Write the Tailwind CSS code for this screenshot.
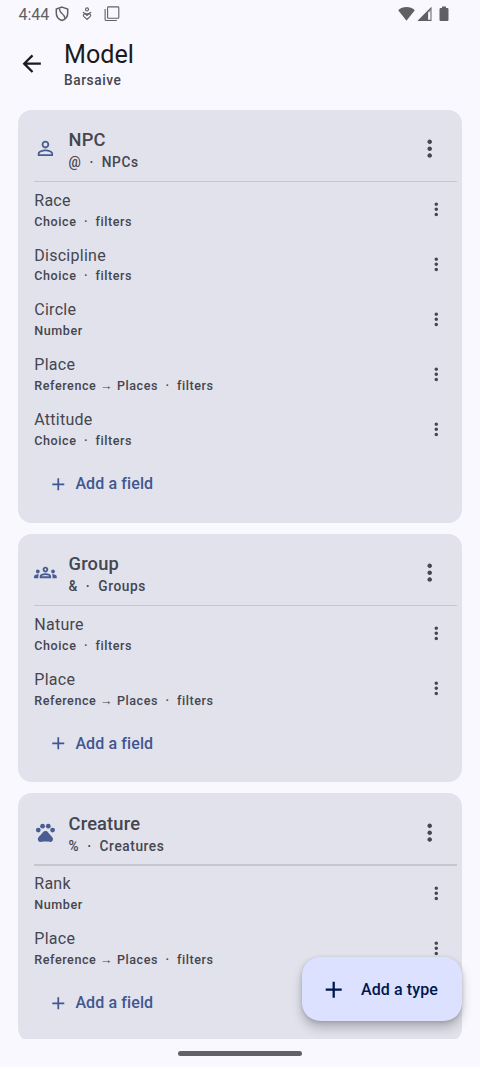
<!DOCTYPE html>
<html lang="en">
<head>
<meta charset="utf-8">
<title>Model</title>
<script src="https://cdn.jsdelivr.net/npm/@tailwindcss/browser@4"></script>
</head>
<body class="bg-[#faf8ff]">
<svg class="hidden">
  <symbol id="more" viewBox="0 0 24 24"><path d="M12 8c1.1 0 2-.9 2-2s-.9-2-2-2-2 .9-2 2 .9 2 2 2zm0 2c-1.1 0-2 .9-2 2s.9 2 2 2 2-.9 2-2-.9-2-2-2zm0 6c-1.1 0-2 .9-2 2s.9 2 2 2 2-.9 2-2-.9-2-2-2z"/></symbol>
  <symbol id="add" viewBox="0 0 24 24"><path d="M19 13h-6v6h-2v-6H5v-2h6V5h2v6h6v2z"/></symbol>
  <symbol id="person" viewBox="0 0 24 24"><path d="M12 5.9a2.1 2.1 0 1 1 0 4.2 2.1 2.1 0 0 1 0-4.2m0 9c2.97 0 6.1 1.46 6.1 2.1v1.1H5.9V17c0-.64 3.13-2.1 6.1-2.1M12 4C9.79 4 8 5.79 8 8s1.79 4 4 4 4-1.79 4-4-1.79-4-4-4zm0 9c-2.67 0-8 1.34-8 4v3h16v-3c0-2.66-5.33-4-8-4z"/></symbol>
  <symbol id="groups" viewBox="0 0 24 24"><path d="M4 13c1.1 0 2-.9 2-2s-.9-2-2-2-2 .9-2 2 .9 2 2 2zm1.13 1.1c-.37-.06-.74-.1-1.13-.1-.99 0-1.93.21-2.78.58C.48 14.9 0 15.62 0 16.43V18h4.5v-1.61c0-.83.23-1.61.63-2.29zM20 13c1.1 0 2-.9 2-2s-.9-2-2-2-2 .9-2 2 .9 2 2 2zm4 3.43c0-.81-.48-1.53-1.22-1.85-.85-.37-1.79-.58-2.78-.58-.39 0-.76.04-1.13.1.4.68.63 1.46.63 2.29V18H24v-1.57zm-7.76-2.78c-1.17-.52-2.61-.9-4.24-.9s-3.07.39-4.24.9C6.68 14.13 6 15.21 6 16.39V18h12v-1.61c0-1.18-.68-2.26-1.76-2.74zM8.07 16c.09-.23.13-.39.91-.69.97-.38 1.99-.56 3.02-.56s2.05.18 3.02.56c.77.3.81.46.91.69H8.07zM12 8c.55 0 1 .45 1 1s-.45 1-1 1-1-.45-1-1 .45-1 1-1m0-2c-1.66 0-3 1.34-3 3s1.34 3 3 3 3-1.34 3-3-1.34-3-3-3z"/></symbol>
  <symbol id="pets" viewBox="0 0 24 24"><circle cx="4.5" cy="9.5" r="2.5"/><circle cx="9" cy="5.5" r="2.5"/><circle cx="15" cy="5.5" r="2.5"/><circle cx="19.5" cy="9.5" r="2.5"/><path d="M17.34 14.86c-.87-1.02-1.6-1.89-2.48-2.91-.46-.54-1.05-1.08-1.75-1.32-.11-.04-.22-.07-.33-.09-.25-.04-.52-.04-.78-.04s-.53 0-.79.05c-.11.02-.22.05-.33.09-.7.24-1.28.78-1.75 1.32-.87 1.02-1.6 1.89-2.48 2.91-1.31 1.31-2.92 2.76-2.62 4.79.29 1.02 1.02 2.03 2.33 2.32.73.15 3.06-.44 5.54-.44h.18c2.48 0 4.81.58 5.54.44 1.31-.29 2.04-1.31 2.33-2.32.31-2.04-1.3-3.49-2.61-4.8z"/></symbol>
</svg>

<div class="relative flex h-[1067px] w-[480px] flex-col overflow-hidden bg-[#faf8ff] font-[Roboto,sans-serif] text-[#45464f]">
  <!-- Status bar -->
  <div class="flex h-[27px] shrink-0 items-center pl-[18.5px] pr-[31px] text-[#606063]">
    <span class="w-[35.5px] pt-[1px] text-[16px] leading-[27px]">4:44</span>
    <svg class="h-4 w-4" viewBox="0 0 16 16" fill="none" stroke="currentColor" stroke-width="1.5"><path d="M8 1.100 13.700 3v4.200c0 3.300-2.400 6.100-5.700 7.300-3.300-1.200-5.700-4-5.700-7.300V3L8 1.100z"/><path stroke-width="1.300" d="M5.600 2.600C5 8.200 11.200 7.200 10.900 12.600"/></svg>
    <svg class="ml-[9px] h-4 w-4" viewBox="0 0 16 16" fill="none" stroke="currentColor" stroke-width="1.1"><circle cx="8" cy="3.4" r="1.5"/><path d="M4 6C4.600 7.400 6.800 7 8 8.300 9.200 7 11.400 7.400 12 6M8 13.400 4.700 10.300C3.500 8.900 5.400 7 7 8.500L8 9.400l1-.9c1.600-1.500 3.500.4 2.300 1.800z"/></svg>
    <svg class="ml-[9px] h-4 w-4" viewBox="0 0 16 16" fill="none" stroke="currentColor" stroke-width="1.1"><rect x="3.600" y=".9" width="11.200" height="11.300" rx=".8"/><path d="M1.100 3.100v10.300q0 1.100 1.100 1.100h10.600"/></svg>
    <div class="flex-1"></div>
    <svg class="h-4 w-[17px]" viewBox="0 0 17 16" fill="currentColor"><path d="M8.5 14.7.2 4.2C4.5-.2 12.500-.2 16.800 4.200z"/></svg>
    <svg class="ml-[2px] h-4 w-[15px]" viewBox="0 0 15 16"><path fill="currentColor" d="M14.500.8V15H.3z"/><path fill="#faf8ff" d="M11.100 5.900 13.500 3.500V13.800H11.100z"/><path fill="currentColor" d="M11.100 4h2.400v2.200h-2.400z" opacity=".5"/></svg>
    <svg class="ml-[7px] h-4 w-[10px]" viewBox="0 0 10 16" fill="currentColor"><path d="M3 .5h4V2h1.300q1.200 0 1.200 1.200v10.600q0 1.200-1.200 1.200H1.700Q.5 15 .5 13.800V3.200Q.5 2 1.700 2H3z"/></svg>
  </div>

  <!-- Top bar -->
  <header class="flex h-[82.8px] shrink-0 items-start">
    <svg class="ml-[18.300px] mt-[23.300px] size-[27.430px] text-[#1a1b21]" viewBox="0 0 24 24" fill="currentColor"><path d="M20 11H7.830l5.590-5.590L12 4l-8 8 8 8 1.410-1.410L7.830 13H20v-2z"/></svg>
    <div class="ml-[18.300px] mt-[12px]">
      <h1 class="text-[25.140px] leading-[32px] text-[#1a1b21]">Model</h1>
      <p class="text-[13.710px] font-medium leading-[18.290px] tracking-[0.570px]">Barsaive</p>
    </div>
  </header>

  <!-- Types -->
  <main id="types" class="flex h-[929.600px] shrink-0 flex-col gap-[11.430px] overflow-hidden px-[18.290px]"></main>

  <!-- Gesture bar -->
  <div class="mx-auto mt-[11.500px] h-[5px] w-[124px] shrink-0 rounded-full bg-[#626266]"></div>

  <!-- Floating button -->
  <button class="absolute left-[301.500px] top-[957px] flex h-[64px] w-[160.200px] items-center rounded-[18.290px] bg-[#dbe1ff] pl-[18px] pt-[1px] text-[#00174b] shadow-[0_7px_11px_rgba(0,0,0,0.22),0_1px_4px_rgba(0,0,0,0.16)]">
    <svg class="size-[27.430px]" fill="currentColor"><use href="#add"/></svg>
    <span class="ml-[14px] whitespace-nowrap text-[16px] font-medium tracking-[0.110px]">Add a type</span>
  </button>
</div>

<template id="card">
  <section class="shrink-0 rounded-[13.710px] bg-[#e1e2ec] pb-[11.430px] pl-[16px] pr-[4.570px]">
    <div class="flex h-[71px] items-center pt-[7px]">
      <svg class="size-[22.860px] text-[#495d92]" fill="currentColor"><use data-icon/></svg>
      <div class="ml-[11.430px] flex-1">
        <h2 data-name class="text-[18.290px] font-medium leading-[27.430px] tracking-[0.170px]"></h2>
        <p data-sub class="whitespace-pre text-[13.710px] font-medium leading-[18.290px] tracking-[0.570px]"></p>
      </div>
      <div class="flex w-[54.860px] justify-center"><svg class="size-[27.430px]" fill="currentColor"><use href="#more"/></svg></div>
    </div>
    <div class="h-[1.140px] bg-[#c6c6d0]"></div>
    <div data-rows></div>
    <div class="flex h-[54.860px] items-center pl-[13.700px] pt-[1px] text-[#415690]">
      <svg class="size-[20.570px]" fill="currentColor"><use href="#add"/></svg>
      <span class="ml-[6.860px] text-[16px] font-medium tracking-[0.110px]">Add a field</span>
    </div>
  </section>
</template>
<template id="row">
  <div class="flex h-[54.860px] items-center">
    <div class="flex-1 pt-[2px]">
      <h3 data-name class="text-[16px] leading-[22.860px] tracking-[0.260px]"></h3>
      <p data-sub class="whitespace-pre text-[12.570px] font-medium leading-[18.290px] tracking-[0.570px]"></p>
    </div>
    <div class="flex w-[41.140px] justify-center"><svg class="size-[20.570px]" fill="currentColor"><use href="#more"/></svg></div>
  </div>
</template>
<script>
const types = [
  { icon: '#person', name: 'NPC', sub: '@  ·  NPCs', fields: [['Race', 'Choice  ·  filters'], ['Discipline', 'Choice  ·  filters'], ['Circle', 'Number'], ['Place', 'Reference → Places  ·  filters'], ['Attitude', 'Choice  ·  filters']] },
  { icon: '#groups', name: 'Group', sub: '&  ·  Groups', fields: [['Nature', 'Choice  ·  filters'], ['Place', 'Reference → Places  ·  filters']] },
  { icon: '#pets', name: 'Creature', sub: '%  ·  Creatures', fields: [['Rank', 'Number'], ['Place', 'Reference → Places  ·  filters']] },
];
const make = id => document.getElementById(id).content.firstElementChild.cloneNode(true);
for (const t of types) {
  const card = make('card');
  card.querySelector('[data-icon]').setAttribute('href', t.icon);
  card.querySelector('[data-name]').textContent = t.name;
  card.querySelector('[data-sub]').textContent = t.sub;
  for (const [name, sub] of t.fields) {
    const row = make('row');
    row.querySelector('[data-name]').textContent = name;
    row.querySelector('[data-sub]').textContent = sub;
    card.querySelector('[data-rows]').append(row);
  }
  document.getElementById('types').append(card);
}
</script>
</body>
</html>
